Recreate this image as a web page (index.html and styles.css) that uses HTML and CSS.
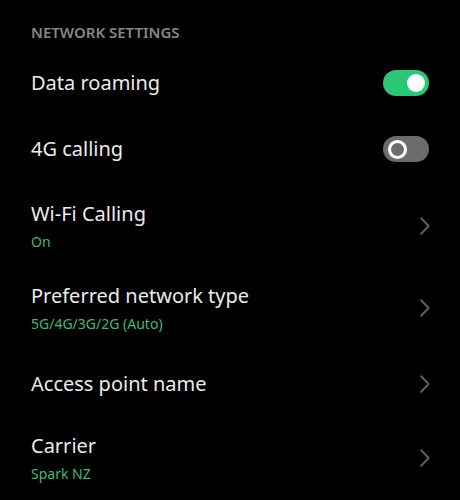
FILE: index.html
```html
<!DOCTYPE html>
<html>
<head>
<meta charset="utf-8">
<link rel="stylesheet" href="styles.css">
</head>
<body>
<div class="screen">
  <div class="section-title">NETWORK SETTINGS</div>
  <div class="row r1">
    <div class="text"><div class="title">Data roaming</div></div>
    <div class="switch on"><span class="knob"></span></div>
  </div>
  <div class="row r2">
    <div class="text"><div class="title">4G calling</div></div>
    <div class="switch off"><span class="knob"></span></div>
  </div>
  <div class="row r3">
    <div class="text"><div class="title">Wi-Fi Calling</div><div class="sub">On</div></div>
    <svg class="chev" width="10" height="18" viewBox="0 0 10 18"><polyline points="1.2,1.2 8.6,9 1.2,16.8" fill="none" stroke="#5e5e5e" stroke-width="2" stroke-linecap="round" stroke-linejoin="round"/></svg>
  </div>
  <div class="row r4">
    <div class="text"><div class="title">Preferred network type</div><div class="sub">5G/4G/3G/2G (Auto)</div></div>
    <svg class="chev" width="10" height="18" viewBox="0 0 10 18"><polyline points="1.2,1.2 8.6,9 1.2,16.8" fill="none" stroke="#5e5e5e" stroke-width="2" stroke-linecap="round" stroke-linejoin="round"/></svg>
  </div>
  <div class="row r5">
    <div class="text"><div class="title">Access point name</div></div>
    <svg class="chev" width="10" height="18" viewBox="0 0 10 18"><polyline points="1.2,1.2 8.6,9 1.2,16.8" fill="none" stroke="#5e5e5e" stroke-width="2" stroke-linecap="round" stroke-linejoin="round"/></svg>
  </div>
  <div class="row r6">
    <div class="text"><div class="title">Carrier</div><div class="sub">Spark NZ</div></div>
    <svg class="chev" width="10" height="18" viewBox="0 0 10 18"><polyline points="1.2,1.2 8.6,9 1.2,16.8" fill="none" stroke="#5e5e5e" stroke-width="2" stroke-linecap="round" stroke-linejoin="round"/></svg>
  </div>
</div>
</body>
</html>
```
FILE: styles.css
```css
html, body {
  margin: 0;
  padding: 0;
  background: #000;
}
.screen {
  width: 460px;
  height: 500px;
  overflow: hidden;
  background: #000;
  font-family: "Noto Sans", "Liberation Sans", sans-serif;
  padding-top: 22px;
  box-sizing: border-box;
}
.section-title {
  padding: 0 31px;
  font-size: 15px;
  font-weight: 600;
  line-height: 20px;
  color: #868686;
  height: 28px;
}
.row {
  display: flex;
  align-items: center;
  justify-content: space-between;
  padding: 0 30px 0 31px;
  box-sizing: border-box;
}
.r1 { height: 66px; }
.r2 { height: 66px; }
.r3 { height: 88px; }
.r4 { height: 76px; }
.r5 { height: 76px; }
.r6 { height: 72px; }
.title {
  font-size: 20px;
  line-height: 26px;
  color: #ebebeb;
}
.sub {
  margin-top: 5px;
  font-size: 14px;
  line-height: 20px;
  color: #3dba78;
}
.switch {
  position: relative;
  width: 46px;
  height: 26px;
  border-radius: 13px;
  margin-right: 1px;
  box-sizing: border-box;
}
.switch.on { background: #2cc677; }
.switch.off { background: #6c6c6c; }
.knob {
  position: absolute;
  top: 50%;
  border-radius: 50%;
  box-sizing: border-box;
}
.switch.on .knob {
  width: 18px;
  height: 18px;
  right: 4px;
  margin-top: -9px;
  background: #fff;
}
.switch.off .knob {
  width: 19px;
  height: 19px;
  left: 5px;
  margin-top: -9.5px;
  border: 3px solid #fff;
  background: #6c6c6c;
}
.chev {
  display: block;
}
```
